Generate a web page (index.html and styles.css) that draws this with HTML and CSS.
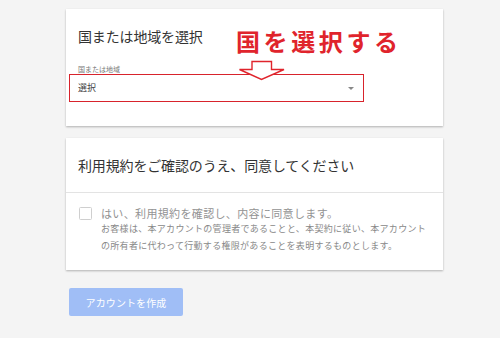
FILE: index.html
```html
<!DOCTYPE html>
<html lang="ja">
<head>
<meta charset="utf-8">
<link rel="stylesheet" href="styles.css">
</head>
<body>
<main class="page">
  <section class="card card-region">
    <h2 class="card-title">国または地域を選択</h2>
    <div class="field-label">国または地域</div>
    <div class="select">
      <span class="select-value">選択</span>
      <span class="select-caret"></span>
    </div>
    <div class="note">国を選択する</div>
    <svg class="note-arrow" width="48" height="21" viewBox="0 0 48 21">
      <path d="M14 1.5 H33.5 V9.5 H46 L23.5 19.5 L1.5 9.5 H14 Z" fill="#fff" stroke="#e0242c" stroke-width="1.4" stroke-linejoin="miter"/>
    </svg>
  </section>

  <section class="card card-terms">
    <h2 class="card-title terms-title">利用規約をご確認のうえ、同意してください</h2>
    <div class="terms-body">
      <div class="check-row">
        <span class="checkbox"></span>
        <span class="check-label">はい、利用規約を確認し、内容に同意します。</span>
      </div>
      <p class="terms-text">お客様は、本アカウントの管理者であることと、本契約に従い、本アカウントの所有者に代わって行動する権限があることを表明するものとします。</p>
    </div>
  </section>

  <button class="submit" type="button">アカウントを作成</button>
</main>
</body>
</html>
```

FILE: styles.css
```css
html, body {
  margin: 0;
  padding: 0;
}

body {
  width: 500px;
  height: 338px;
  overflow: hidden;
  background: #f4f4f4;
  font-family: "Noto Sans CJK JP", "Noto Sans", sans-serif;
}

.page {
  display: flex;
  flex-direction: column;
  align-items: flex-start;
  padding: 9px 0 0 66px;
}

.card {
  position: relative;
  width: 377px;
  background: #fff;
  box-shadow: 0 1px 2px rgba(0, 0, 0, 0.28);
  box-sizing: border-box;
}

.card-region {
  height: 117px;
  padding: 17px 0 0 12px;
}

.card-title {
  margin: 0;
  font-size: 14px;
  line-height: 20px;
  font-weight: 400;
  color: #333;
  letter-spacing: -0.15px;
}

.field-label {
  margin-top: 18px;
  font-size: 7px;
  line-height: 10px;
  color: #777;
}

.select {
  display: flex;
  align-items: center;
  justify-content: space-between;
  box-sizing: border-box;
  width: 295px;
  height: 28px;
  margin-left: -9px;
  padding: 0 9px 0 8px;
  border: 1.5px solid #d8232c;
}

.select-value {
  font-size: 9px;
  line-height: 12px;
  color: #444;
}

.select-caret {
  width: 0;
  height: 0;
  margin-top: 1px;
  border-left: 3.5px solid transparent;
  border-right: 3.5px solid transparent;
  border-top: 3.5px solid #888;
}

.note {
  position: absolute;
  left: 170px;
  top: 17px;
  font-size: 24px;
  line-height: 30px;
  font-weight: 700;
  letter-spacing: 3.6px;
  color: #e0242c;
  white-space: nowrap;
}

.note-arrow {
  position: absolute;
  left: 172px;
  top: 51px;
  display: block;
}

.card-terms {
  margin-top: 12px;
  height: 132px;
}

.terms-title {
  padding: 17px 12px 17px 12px;
  border-bottom: 1px solid #e3e3e3;
}

.terms-body {
  padding: 12px 12px 0 13px;
}

.check-row {
  display: flex;
  align-items: center;
  gap: 9px;
}

.checkbox {
  display: block;
  width: 13px;
  height: 13px;
  box-sizing: border-box;
  border: 1.5px solid #cfcfcf;
  border-radius: 1.5px;
}

.check-label {
  font-size: 11px;
  line-height: 16px;
  color: #939393;
  letter-spacing: 0.35px;
}

.terms-text {
  margin: 0 0 0 22px;
  font-size: 9px;
  line-height: 16.5px;
  letter-spacing: 0.3px;
  color: #888;
}

.submit {
  margin: 18px 0 0 3px;
  width: 114px;
  height: 28px;
  padding: 0;
  border: none;
  border-radius: 2px;
  background: #a0bef6;
  color: #fff;
  font-family: inherit;
  font-size: 10px;
  letter-spacing: 0.1px;
}
```
